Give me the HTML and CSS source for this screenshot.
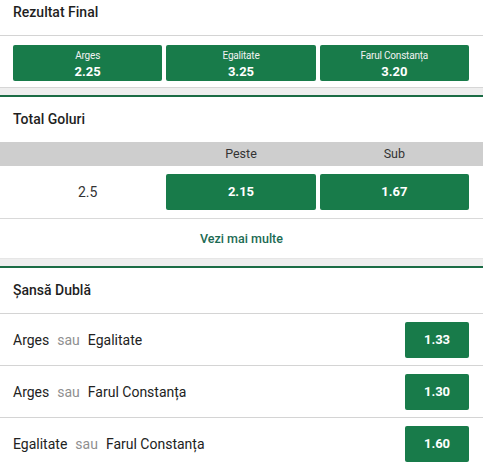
FILE: index.html
```html
<!DOCTYPE html>
<html lang="ro">
<head>
<meta charset="utf-8">
<title>Piețe</title>
<link rel="stylesheet" href="styles.css">
</head>
<body>
  <section class="market market--first">
    <div class="market__title market__title--first">Rezultat Final</div>
    <div class="odds-grid odds-grid--main">
      <button class="odd odd--labeled"><span class="odd__label">Arges</span><span class="odd__value">2.25</span></button>
      <button class="odd odd--labeled"><span class="odd__label">Egalitate</span><span class="odd__value">3.25</span></button>
      <button class="odd odd--labeled"><span class="odd__label">Farul Constanța</span><span class="odd__value">3.20</span></button>
    </div>
  </section>
  <div class="spacer"></div>

  <section class="market">
    <div class="market__title">Total Goluri</div>
    <div class="odds-grid odds-grid--head">
      <span></span><span class="col-head">Peste</span><span class="col-head">Sub</span>
    </div>
    <div class="odds-grid odds-grid--row">
      <span class="line-value">2.5</span>
      <button class="odd"><span class="odd__value">2.15</span></button>
      <button class="odd"><span class="odd__value">1.67</span></button>
    </div>
    <a class="more" href="#">Vezi mai multe</a>
  </section>
  <div class="spacer spacer--plain"></div>

  <section class="market">
    <div class="market__title market__title--ruled">Șansă Dublă</div>
    <div class="dc-row">
      <span class="dc-row__label"><span>Arges</span><span class="dc-row__or">sau</span><span>Egalitate</span></span>
      <button class="odd odd--small"><span class="odd__value">1.33</span></button>
    </div>
    <div class="dc-row">
      <span class="dc-row__label"><span>Arges</span><span class="dc-row__or">sau</span><span>Farul Constanța</span></span>
      <button class="odd odd--small"><span class="odd__value">1.30</span></button>
    </div>
    <div class="dc-row">
      <span class="dc-row__label"><span>Egalitate</span><span class="dc-row__or">sau</span><span>Farul Constanța</span></span>
      <button class="odd odd--small"><span class="odd__value">1.60</span></button>
    </div>
  </section>
</body>
</html>
```

FILE: styles.css
```css
* { box-sizing: border-box; }

html, body {
  margin: 0;
  padding: 0;
  background: #ffffff;
}

body {
  font-family: Roboto, "Noto Sans", Arial, sans-serif;
  font-size: 14px;
  color: #212121;
  width: 483px;
  overflow: hidden;
}

.market {
  border-top: 2px solid #1b6c45;
  background: #fff;
}

.market--first {
  border-top: 0;
}

.market__title {
  height: 45px;
  padding: 14px 13px 0;
  line-height: 16px;
  font-size: 14px;
  font-weight: 500;
  color: #1f1f1f;
}

.market__title--first {
  height: 36px;
  padding-top: 4px;
  border-bottom: 1px solid #d4d4d4;
}

.market__title--ruled {
  height: 46px;
  border-bottom: 1px solid #d4d4d4;
}

.odds-grid {
  display: grid;
  grid-template-columns: repeat(3, 1fr);
  column-gap: 4px;
  padding: 0 14px 0 13px;
}

.odds-grid--main {
  padding-top: 9px;
  padding-bottom: 6px;
}

.odds-grid--head {
  height: 24px;
  background: #cecece;
  line-height: 24px;
  text-align: center;
  color: #333;
  font-size: 12.5px;
}

.odds-grid--row {
  height: 53px;
  padding-top: 8px;
  padding-bottom: 8px;
  border-bottom: 1px solid #d9d9d9;
  align-items: center;
}

.line-value {
  text-align: center;
  color: #333;
  font-size: 14px;
}

.odd {
  display: flex;
  flex-direction: column;
  align-items: center;
  justify-content: center;
  height: 36px;
  margin: 0;
  padding: 0;
  border: 0;
  border-radius: 2px;
  background: #187b4a;
  color: #fff;
  font-family: inherit;
  cursor: pointer;
}

.odd--labeled {
  justify-content: flex-start;
  padding-top: 5px;
}

.odd__label {
  font-size: 10px;
  line-height: 12px;
  letter-spacing: -0.2px;
  color: #f2f2f2;
}

.odd__value {
  font-size: 13px;
  font-weight: 700;
  line-height: 16px;
}

.odd--labeled .odd__value {
  margin-top: 2px;
}

.odd--small {
  width: 64px;
  flex: 0 0 64px;
}

.more {
  display: block;
  height: 39px;
  line-height: 39px;
  text-align: center;
  color: #1c6b53;
  font-weight: 500;
  font-size: 12.5px;
  text-decoration: none;
}

.spacer {
  height: 8px;
  border-top: 1px solid #d6d6d6;
  background: #eeeeee;
}

.spacer--plain {
  border-top-color: #e6e6e6;
}

.dc-row {
  display: flex;
  align-items: center;
  justify-content: space-between;
  height: 52px;
  padding: 8px 14px 7px 13px;
  border-bottom: 1px solid #d4d4d4;
}

.dc-row__label {
  display: flex;
  gap: 8px;
  font-size: 14px;
  color: #222;
}

.dc-row__or {
  color: #8f8f8f;
}
```
